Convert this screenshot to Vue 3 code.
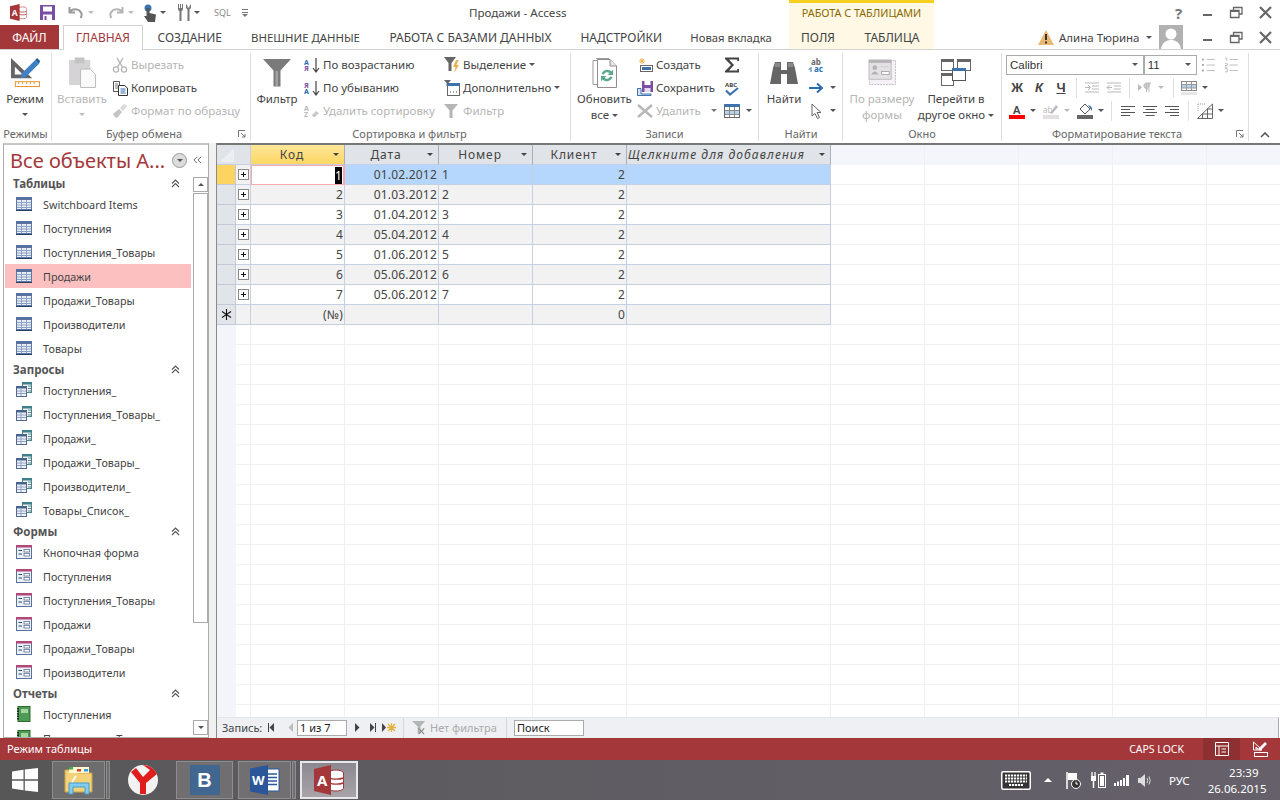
<template>
  <div class="app">
    <!-- спрайт иконок -->
    <svg class="sprite" aria-hidden="true">
      <symbol id="tbl" viewBox="0 0 16 16">
        <rect x="0.5" y="1.5" width="15" height="12" fill="#e6ecf5" stroke="#5f78a3" />
        <rect x="0" y="1" width="16" height="3" fill="#56719f" />
        <path d="M1 6.5H15M1 9H15M1 11.5H15M5.5 4V13M10.5 4V13" stroke="#8ea3c4" />
        <path d="M0 14.5H16" stroke="#2f3f5c" />
      </symbol>
      <symbol id="qry" viewBox="0 0 16 16">
        <rect x="6.5" y="0.5" width="9" height="10" fill="#eef3f4" stroke="#4d8390" />
        <rect x="6" y="0" width="10" height="2.5" fill="#3e8089" />
        <path d="M12 4H15M12 6.5H15M12 9H15" stroke="#5f7f8a" />
        <rect x="0.5" y="4.5" width="10" height="10" fill="#eef2f7" stroke="#53688c" />
        <rect x="0" y="4" width="11" height="2.5" fill="#47648f" />
        <path d="M1 9H10M1 11.5H10M5 7V14" stroke="#8ea3c4" />
      </symbol>
      <symbol id="frm" viewBox="0 0 16 16">
        <rect x="0.5" y="1.5" width="15" height="13" fill="#edf1f7" stroke="#59709a" />
        <rect x="0" y="1" width="16" height="2.5" fill="#b3477a" />
        <path d="M2.5 6.5H6M2.5 10H6" stroke="#394a68" />
        <rect x="8" y="5.5" width="5.5" height="2.5" fill="#fff" stroke="#59709a" stroke-width=".8" />
        <rect x="8" y="9.5" width="5.5" height="2.5" fill="#fff" stroke="#59709a" stroke-width=".8" />
      </symbol>
      <symbol id="rpt" viewBox="0 0 16 16">
        <rect x="2" y="0.5" width="12" height="15" fill="#4f9a55" stroke="#2d6a36" />
        <rect x="5" y="3" width="7" height="4" fill="#a5d8a0" />
        <path d="M2 2V14" stroke="#1f2f22" stroke-width="2" stroke-dasharray="1.5 1" />
      </symbol>
      <symbol id="mode" viewBox="0 0 32 32">
        <path fill-rule="evenodd" d="M1 1 L1 22 L23 22 Z M5 10 L5 18 L13 18 Z" fill="#666" />
        <path d="M12 17 L26 3 L30 7 L16 21 L11 22 Z" fill="#3f7fc4" />
        <path d="M26 3 L28 1 L31 4 L30 7Z" fill="#1f5c9c" />
        <rect x="5.5" y="25.5" width="25" height="5" fill="#fff" stroke="#e8912d" />
        <path d="M9 26V28M13 26V28M17 26V28M21 26V28M25 26V28" stroke="#e8912d" />
      </symbol>
      <symbol id="paste" viewBox="0 0 30 32">
        <rect x="1" y="3" width="22" height="26" fill="#d6d3d6" />
        <rect x="7" y="0.5" width="10" height="6" fill="#c6c3c6" />
        <path d="M13 12.5H23L28.5 18V31.5H13Z" fill="#fbfbfb" stroke="#bdbabd" />
      </symbol>
      <symbol id="cut" viewBox="0 0 16 16">
        <path d="M5 1 L10.5 10M11 1 L5.5 10" stroke="#b5b5b5" stroke-width="1.4" fill="none" />
        <circle cx="4" cy="12.5" r="2.6" fill="none" stroke="#b5b5b5" stroke-width="1.3" />
        <circle cx="12" cy="12.5" r="2.6" fill="none" stroke="#b5b5b5" stroke-width="1.3" />
      </symbol>
      <symbol id="copy" viewBox="0 0 16 16">
        <path d="M1.5 1.5H7.5V11.5H1.5Z" fill="#fff" stroke="#555" />
        <path d="M3 4H6M3 6H6M3 8H6" stroke="#777" />
        <path d="M6.5 5.5H12.5L15.5 8V15.5H6.5Z" fill="#fff" stroke="#333" />
        <path d="M8.5 9H13.5M8.5 11H13.5M8.5 13H13.5" stroke="#2a6cb0" />
      </symbol>
      <symbol id="brush" viewBox="0 0 16 16">
        <path d="M1 11 L7 6 L10 9 L5 15 Q2 14 1 11Z" fill="#c4c4c4" />
        <path d="M8 5 L12 1 L15 3 L11 8Z" fill="#dadada" />
      </symbol>
      <symbol id="funnel" viewBox="0 0 28 28">
        <path d="M0 0H28L17.5 11.5V27.5H10.5V11.5Z" fill="#7a7a7a" />
        <path d="M12.5 12H15V27H12.5Z" fill="#a3a3a3" />
      </symbol>
      <symbol id="fsel" viewBox="0 0 16 16">
        <path d="M0 0H12L7.5 6V14H4.5V6Z" fill="#666" />
        <path d="M12 3L9 10H11.5L10 16L15 8H12.5L14.5 3Z" fill="#eeb24e" />
      </symbol>
      <symbol id="fadv" viewBox="0 0 16 16">
        <path d="M0 0H7L4.5 3V6H2.5V3Z" fill="#666" />
        <rect x="3.5" y="3.5" width="12" height="12" fill="#fff" stroke="#666" />
        <rect x="3" y="3" width="13" height="3" fill="#3d72ad" />
        <path d="M6 12H7M9 12H10M12 12H13" stroke="#444" />
      </symbol>
      <symbol id="fgrey" viewBox="0 0 16 16">
        <path d="M0 1H14L8.5 7.5V15H5.5V7.5Z" fill="#b5b5b5" />
      </symbol>
      <symbol id="refresh" viewBox="0 0 26 30">
        <path d="M1 2.5H8V26.5H1Z M4 0.5H17V4" fill="none" stroke="#9a9a9a" />
        <path d="M5.5 1.5H18L24.5 8V29.5H5.5Z" fill="#fff" stroke="#8f8f8f" />
        <path d="M18 1.5V8H24.5" fill="#e6e6e6" stroke="#8f8f8f" />
        <path d="M9.5 16 A6 6 0 0 1 19.5 13.5L21 11.5V17H15.5L17.5 15A3.5 3.5 0 0 0 12 16.5Z" fill="#5ba88e" />
        <path d="M20.5 19A6 6 0 0 1 10.5 21.5L9 23.5V18H14.5L12.5 20A3.5 3.5 0 0 0 18 18.5Z" fill="#5ba88e" />
      </symbol>
      <symbol id="newrec" viewBox="0 0 16 16">
        <rect x="3.5" y="8.5" width="12" height="6" fill="#fff" stroke="#666" />
        <rect x="5" y="10" width="9" height="3" fill="#3d72ad" />
        <path d="M5 1V7M2 4H8M3 2L7 6M7 2L3 6" stroke="#eeb24e" />
      </symbol>
      <symbol id="saverec" viewBox="0 0 16 16">
        <path d="M0.5 8.5H4V14H14V15.5H0.5Z" fill="#d8e4f2" stroke="#3d72ad" />
        <rect x="5" y="1" width="11" height="11" fill="#7a4fa3" />
        <rect x="7.5" y="1" width="6" height="4" fill="#fff" />
        <rect x="7.5" y="8" width="6" height="4" fill="#e4d9ee" />
      </symbol>
      <symbol id="delrec" viewBox="0 0 16 16">
        <path d="M1 2L15 14M15 2L1 14" stroke="#b9b9b9" stroke-width="2.6" />
      </symbol>
      <symbol id="sigma" viewBox="0 0 16 16">
        <path d="M1 0.5H15V4H13.5L13 2.5H5L10 8L5 13.5H13L13.5 12H15V15.5H1V14L7 8L1 2Z" fill="#444" />
      </symbol>
      <symbol id="more" viewBox="0 0 16 16">
        <rect x="0.5" y="1.5" width="15" height="13" fill="#fff" stroke="#666" />
        <rect x="0" y="1" width="16" height="3" fill="#3d72ad" />
        <rect x="1" y="8" width="14" height="3" fill="#b6d1ea" />
        <path d="M1 7.5H15M1 11.5H15M5.5 4V14M10.5 4V14" stroke="#888" />
      </symbol>
      <symbol id="binoc" viewBox="0 0 28 24">
        <path d="M3 7L5 1H11V9H17V1H23L25 7L28 23H17V13H11V23H0Z" fill="#666" />
        <path d="M5 2H10V6H5ZM18 2H23V6H18Z" fill="#8a8a8a" />
      </symbol>
      <symbol id="goto" viewBox="0 0 16 16">
        <path d="M1 8H13M9 3.5L14 8L9 12.5" fill="none" stroke="#2a6cb0" stroke-width="2" />
      </symbol>
      <symbol id="cursor" viewBox="0 0 16 16">
        <path d="M4 1V13L7 10.5L9.5 15.5L11.5 14.5L9 9.5H13Z" fill="#fff" stroke="#666" />
      </symbol>
      <symbol id="fit" viewBox="0 0 30 28">
        <rect x="1.5" y="1.5" width="27" height="25" fill="#f6f1f7" stroke="#bcbcbc" stroke-dasharray="2 1" />
        <rect x="1" y="1" width="23" height="20" fill="#e3e1e4" stroke="#bcbcbc" />
        <rect x="1" y="1" width="23" height="3" fill="#b5b3b6" />
        <circle cx="7" cy="9" r="2.4" fill="#b5b3b6" />
        <path d="M3 16Q7 10 11 16Z" fill="#b5b3b6" />
        <rect x="14" y="13" width="8" height="3" fill="#fff" stroke="#aaa" />
        <path d="M14 8H21" stroke="#bbb" stroke-dasharray="1 1" />
      </symbol>
      <symbol id="windows" viewBox="0 0 30 27">
        <rect x="0.5" y="0.5" width="12" height="11" fill="#fff" stroke="#666" />
        <rect x="0" y="0" width="13" height="3" fill="#666" />
        <rect x="16.5" y="0.5" width="13" height="11" fill="#fff" stroke="#666" />
        <rect x="16" y="0" width="14" height="3" fill="#666" />
        <rect x="0.5" y="14.5" width="12" height="12" fill="#fff" stroke="#666" />
        <rect x="0" y="14" width="13" height="3" fill="#666" />
        <rect x="11.5" y="9.5" width="13" height="12" fill="#fff" stroke="#555" />
        <rect x="11" y="9" width="14" height="3" fill="#3d72ad" />
      </symbol>
      <symbol id="accbase" viewBox="0 0 30 30">
        <ellipse cx="22" cy="8" rx="7.5" ry="3" fill="#fff" stroke="#a4373a" />
        <rect x="14" y="8" width="15.5" height="15" fill="#fff" />
        <path d="M29.5 8V23C29.5 25 25 26 22 26 19 26 16 25.5 15 24" fill="#fff" stroke="#a4373a" />
        <path d="M16 13C18 14.5 26 14.5 29 13M16 18C18 19.5 26 19.5 29 18" fill="none" stroke="#a4373a" stroke-width="1.4" />
        <path d="M0 4L17 0V30L0 26Z" fill="#a4373a" />
      </symbol>
    </svg>

    <!-- заголовок окна -->
    <header class="titlebar">
      <div class="qat">
        <svg class="qa17" viewBox="0 0 30 30">
          <use href="#accbase" width="30" height="30" />
          <text x="3" y="21" font-size="15" font-weight="700" font-family="Noto Sans" fill="#fff">A</text>
        </svg>
        <svg width="15" height="15" viewBox="0 0 15 15">
          <rect width="15" height="15" fill="#7a4fa3" />
          <rect x="3" y="1.5" width="9" height="5" fill="#fff" />
          <rect x="3" y="9.5" width="9" height="5.5" fill="#fff" />
          <rect x="4.5" y="11" width="2" height="4" fill="#7a4fa3" />
        </svg>
        <svg width="15" height="13" viewBox="0 0 15 13">
          <path d="M1.5 1V6.5H7M1.5 6.5C4 2 11 2 13.5 7.5 14 9 13.5 10.5 12.5 12" fill="none" stroke="#9b9b9b" stroke-width="2" />
        </svg>
        <i class="cr off"></i>
        <svg width="15" height="13" viewBox="0 0 15 13">
          <path d="M13.5 1V6.5H8M13.5 6.5C11 2 4 2 1.5 7.5 1 9 1.5 10.5 2.5 12" fill="none" stroke="#b5b5b5" stroke-width="2" />
        </svg>
        <i class="cr off"></i>
        <svg width="15" height="18" viewBox="0 0 15 18">
          <circle cx="5" cy="4" r="3.5" fill="#3d72ad" />
          <path d="M3.5 4H6.5V9L13 10.5 12 18H5L1 12 3.5 12Z" fill="#555" />
        </svg>
        <i class="cr"></i>
        <svg width="14" height="17" viewBox="0 0 14 17">
          <path d="M1 0V5Q1 7 2.5 7V17H4.5V7Q6 7 6 5V0H5V4H4V0H3V4H2V0Z" fill="#777" />
          <path d="M9 0V4L10.5 5.5V17H12.5V5.5L14 4V0L12.5 2V3.5H10.5V2Z" fill="#777" />
        </svg>
        <i class="cr"></i>
        <span class="sql">SQL</span>
        <svg width="8" height="9" viewBox="0 0 8 9">
          <path d="M1 1.5H7M1 4.5H7" stroke="#777" />
          <path d="M1 6H7L4 9Z" fill="#777" />
        </svg>
      </div>
      <div class="title">Продажи - Access</div>
      <div class="ctx-head">РАБОТА С ТАБЛИЦАМИ</div>
      <div class="win-btns">
        <span class="help">?</span>
        <svg class="wb"><path d="M3 10H12" stroke="#666" stroke-width="2" /></svg>
        <svg class="wb"><path d="M4.5 5.5V2.5H13V9H10M1.5 5.5H10V12.5H1.5Z" fill="none" stroke="#666" stroke-width="1.3" /><path d="M1.5 6H10" stroke="#666" stroke-width="2" /></svg>
        <svg class="wb"><path d="M2 2L13 13M13 2L2 13" stroke="#666" stroke-width="2.2" /></svg>
      </div>
    </header>

    <!-- вкладки -->
    <nav class="tabs">
      <div class="tab file">ФАЙЛ</div>
      <div class="tab active">ГЛАВНАЯ</div>
      <div class="tab t1">СОЗДАНИЕ</div>
      <div class="tab t2">ВНЕШНИЕ ДАННЫЕ</div>
      <div class="tab t3">РАБОТА С БАЗАМИ ДАННЫХ</div>
      <div class="tab t4">НАДСТРОЙКИ</div>
      <div class="tab t5">Новая вкладка</div>
      <div class="ctx-tabs">
        <div class="tab c1">ПОЛЯ</div>
        <div class="tab c2">ТАБЛИЦА</div>
      </div>
      <div class="user">
        <svg width="16" height="15" viewBox="0 0 16 15">
          <path d="M8 0L16 15H0Z" fill="#e9b872" />
          <path d="M7 4H9V10H7ZM7 11.5H9V13.5H7Z" fill="#333" />
        </svg>
        <span class="user-name">Алина Тюрина</span>
        <i class="cr"></i>
        <svg class="avatar" viewBox="0 0 24 24">
          <rect width="24" height="24" fill="#b1b1b1" />
          <circle cx="12" cy="9" r="5.5" fill="#fff" />
          <path d="M2 24C3 17 8 15 12 15S21 17 22 24Z" fill="#fff" />
        </svg>
      </div>
      <div class="win-btns doc-btns">
        <svg class="wb"><path d="M3 10H12" stroke="#666" stroke-width="2" /></svg>
        <svg class="wb"><path d="M4.5 5.5V2.5H13V9H10M1.5 5.5H10V12.5H1.5Z" fill="none" stroke="#666" stroke-width="1.3" /><path d="M1.5 6H10" stroke="#666" stroke-width="2" /></svg>
        <svg class="wb"><path d="M2 2L13 13M13 2L2 13" stroke="#666" stroke-width="2.2" /></svg>
      </div>
    </nav>

    <!-- лента -->
    <section class="ribbon">
      <div class="group g-mode">
        <div class="g-body">
          <div class="big w50">
            <div class="big-ic"><svg width="31" height="31"><use href="#mode" /></svg></div>
            <span>Режим</span>
            <i class="cr line"></i>
          </div>
        </div>
        <div class="g-label">Режимы</div>
      </div>

      <div class="group g-clip">
        <div class="g-body">
          <div class="big w52 off">
            <div class="big-ic"><svg width="29" height="31"><use href="#paste" /></svg></div>
            <span>Вставить</span>
            <i class="cr line off"></i>
          </div>
          <div class="col">
            <div class="sb off"><svg class="i16"><use href="#cut" /></svg>Вырезать</div>
            <div class="sb"><svg class="i16"><use href="#copy" /></svg>Копировать</div>
            <div class="sb off"><svg class="i16"><use href="#brush" /></svg>Формат по образцу</div>
          </div>
        </div>
        <div class="g-label">Буфер обмена<svg class="launch" viewBox="0 0 8 8"><path d="M0.5 7V0.5H7M3 3L7 7M7 4V7H4" fill="none" stroke="#777" /></svg></div>
      </div>

      <div class="group g-sort">
        <div class="g-body">
          <div class="big w40">
            <div class="big-ic"><svg width="28" height="28"><use href="#funnel" /></svg></div>
            <span>Фильтр</span>
          </div>
          <div class="col w140">
            <div class="sb">
              <svg class="i16" viewBox="0 0 16 16">
                <text font-size="7" font-family="Noto Sans" font-weight="700"><tspan x="0" y="7.5" fill="#2a6cb0">А</tspan><tspan x="0" y="14" fill="#7a4fa3">Я</tspan></text>
                <path d="M12 1V14M9 11L12 15L15 11" fill="none" stroke="#444" stroke-width="1.2" />
              </svg>По возрастанию
            </div>
            <div class="sb">
              <svg class="i16" viewBox="0 0 16 16">
                <text font-size="7" font-family="Noto Sans" font-weight="700"><tspan x="0" y="7.5" fill="#7a4fa3">Я</tspan><tspan x="0" y="14" fill="#2a6cb0">А</tspan></text>
                <path d="M12 1V14M9 11L12 15L15 11" fill="none" stroke="#444" stroke-width="1.2" />
              </svg>По убыванию
            </div>
            <div class="sb off">
              <svg class="i16" viewBox="0 0 16 16">
                <text font-size="7" font-family="Noto Sans" font-weight="700" fill="#bbb"><tspan x="0" y="7.5">A</tspan><tspan x="0" y="14">Z</tspan></text>
                <path d="M8 12L12 8L15 10L11 14H9Z" fill="#c9c9c9" />
              </svg>Удалить сортировку
            </div>
          </div>
          <div class="col">
            <div class="sb"><svg class="i16"><use href="#fsel" /></svg>Выделение <i class="cr"></i></div>
            <div class="sb"><svg class="i16"><use href="#fadv" /></svg>Дополнительно <i class="cr"></i></div>
            <div class="sb off"><svg class="i16"><use href="#fgrey" /></svg>Фильтр</div>
          </div>
        </div>
        <div class="g-label">Сортировка и фильтр</div>
      </div>

      <div class="group g-rec">
        <div class="g-body">
          <div class="big w55">
            <div class="big-ic"><svg width="26" height="30"><use href="#refresh" /></svg></div>
            <span>Обновить</span>
            <span>все <i class="cr"></i></span>
          </div>
          <div class="col w87">
            <div class="sb"><svg class="i16"><use href="#newrec" /></svg>Создать</div>
            <div class="sb"><svg class="i16"><use href="#saverec" /></svg>Сохранить</div>
            <div class="sb off"><svg class="i16"><use href="#delrec" /></svg>Удалить <i class="cr spaced"></i></div>
          </div>
          <div class="col">
            <div class="sb"><svg class="i16"><use href="#sigma" /></svg></div>
            <div class="sb">
              <svg class="i16" viewBox="0 0 16 16">
                <text x="1" y="7" font-size="6" font-weight="700" font-family="Noto Sans" fill="#444">ABC</text>
                <path d="M2 10.5L6 14.5L14 8" fill="none" stroke="#3d72ad" stroke-width="2.2" />
              </svg>
            </div>
            <div class="sb"><svg class="i16"><use href="#more" /></svg><i class="cr ic"></i></div>
          </div>
        </div>
        <div class="g-label">Записи</div>
      </div>

      <div class="group g-find">
        <div class="g-body">
          <div class="big w34">
            <div class="big-ic"><svg width="28" height="24"><use href="#binoc" /></svg></div>
            <span>Найти</span>
          </div>
          <div class="col">
            <div class="sb">
              <svg class="i16 wide" viewBox="0 0 18 16">
                <text font-size="8" font-weight="700" font-family="Noto Sans"><tspan x="3" y="8" fill="#666">ab</tspan><tspan x="6" y="14.5" fill="#2a6cb0">ac</tspan></text>
                <path d="M0.5 13L3 10.5V15" fill="none" stroke="#2a6cb0" />
              </svg>
            </div>
            <div class="sb"><svg class="i16"><use href="#goto" /></svg><i class="cr ic"></i></div>
            <div class="sb"><svg class="i16"><use href="#cursor" /></svg><i class="cr ic"></i></div>
          </div>
        </div>
        <div class="g-label">Найти</div>
      </div>

      <div class="group g-win">
        <div class="g-body">
          <div class="big w70 off">
            <div class="big-ic"><svg width="29" height="27"><use href="#fit" /></svg></div>
            <span>По размеру</span>
            <span>формы</span>
          </div>
          <div class="big w78">
            <div class="big-ic"><svg width="30" height="27"><use href="#windows" /></svg></div>
            <span>Перейти в</span>
            <span>другое окно <i class="cr"></i></span>
          </div>
        </div>
        <div class="g-label">Окно</div>
      </div>

      <div class="group g-text">
        <div class="tx-rows">
          <div class="tx-row">
            <div class="combo font"><span>Calibri</span><i class="cr"></i></div>
            <div class="combo size"><span>11</span><i class="cr"></i></div>
            <svg class="list" viewBox="0 0 14 16"><path d="M0 2H2M0 8H2M0 14H2" stroke="#aaa" stroke-width="2" /><path d="M5 2H14M5 8H14M5 14H14" stroke="#bbb" /></svg>
            <svg class="list" viewBox="0 0 14 16"><path d="M0 0.5H2V3.5M0 6.5H2.5V8.5H0V10.5H2.5M0 12H2.5V15.5H0" fill="none" stroke="#aaa" stroke-width=".8" /><path d="M5 2H14M5 8H14M5 14H14" stroke="#bbb" /></svg>
          </div>
          <div class="tx-row">
            <b class="tb fmt">Ж</b>
            <b class="tb fmt it">К</b>
            <b class="tb fmt un">Ч</b>
            <i class="ts"></i>
            <span class="tb"><svg class="i16"><path d="M1 3H15M8 6H15M8 9H15M1 12H15M1 7.5H6M4 5L6.5 7.5L4 10" fill="none" stroke="#b9b9b9" /></svg></span>
            <span class="tb"><svg class="i16"><path d="M1 3H15M8 6H15M8 9H15M1 12H15M1 7.5H6M3.5 5L1 7.5L3.5 10" fill="none" stroke="#b9b9b9" /></svg></span>
            <i class="ts"></i>
            <span class="tb"><svg class="i16"><path d="M1 4L5 7.5L1 11Z" fill="#bbb" /><path d="M9.5 12V3H14M12 3V12M10 3Q6 3.5 7 6.5T10 8" fill="#ccc" stroke="#bbb" /></svg></span>
            <i class="cr off c10"></i>
            <i class="ts wide"></i>
            <span class="tb"><svg class="i16"><rect x="0.5" y="1.5" width="15" height="9" fill="#fff" stroke="#888" /><rect x="1" y="5" width="14" height="3" fill="#b6d1ea" /><path d="M1 4.5H15M1 8H15M5.5 2V10M10.5 2V10" stroke="#999" /><rect y="12" width="16" height="3" fill="#e6e6e6" /></svg></span>
            <i class="cr c10"></i>
          </div>
          <div class="tx-row">
            <span class="tb"><svg class="i16"><text x="4" y="11" font-size="11" font-weight="600" font-family="Noto Sans" fill="#444">A</text><rect y="12" width="16" height="4" fill="#f00" /></svg></span>
            <i class="cr c10"></i>
            <span class="tb gp"><svg class="i16"><text x="0" y="9.5" font-size="8" font-family="Noto Sans" fill="#bbb">ab</text><path d="M7 10L13 2L15 4L9 11Z" fill="#bbb" /><rect y="12" width="16" height="4" fill="#e3e0e4" /></svg></span>
            <i class="cr off c10"></i>
            <span class="tb gp"><svg class="i16"><path d="M3 6L8 1L13 6L8 11Z" fill="#fff" stroke="#555" /><path d="M11 2Q16 3 15 8L13 5Z" fill="#3d72ad" /><rect y="12" width="16" height="4" fill="#666" /></svg></span>
            <i class="cr c10"></i>
            <i class="ts r3"></i>
            <span class="tb"><svg class="i16"><path d="M1 3.5H15M1 6.5H10M1 9.5H15M1 12.5H10" stroke="#555" /></svg></span>
            <span class="tb"><svg class="i16"><path d="M1 3.5H15M3.5 6.5H12.5M1 9.5H15M3.5 12.5H12.5" stroke="#555" /></svg></span>
            <span class="tb"><svg class="i16"><path d="M1 3.5H15M6 6.5H15M1 9.5H15M6 12.5H15" stroke="#555" /></svg></span>
            <i class="ts r3"></i>
            <span class="tb"><svg class="i16"><path d="M0.5 15.5L15.5 1V15.5Z" fill="#fff" stroke="#666" /><path d="M5.5 11V15.5M10.5 6V15.5M5 11H15.5M10 6H15.5" stroke="#666" /><path d="M1 1H9M1 1V8" stroke="#999" stroke-dasharray="1 1" /></svg></span>
            <i class="cr c10"></i>
          </div>
        </div>
        <div class="g-label">Форматирование текста<svg class="launch" viewBox="0 0 8 8"><path d="M0.5 7V0.5H7M3 3L7 7M7 4V7H4" fill="none" stroke="#777" /></svg></div>
      </div>

      <div class="collapse">
        <svg width="10" height="6" viewBox="0 0 10 6"><path d="M1 5L5 1L9 5" fill="none" stroke="#555" stroke-width="1.6" /></svg>
      </div>
    </section>

    <main class="body">
      <!-- область навигации -->
      <aside class="nav">
        <div class="nav-head">
          <span class="nav-title">Все объекты А...</span>
          <span class="nav-drop"><i class="cr"></i></span>
          <svg class="nav-fold" viewBox="0 0 10 8"><path d="M4.5 0.5L1 4L4.5 7.5M9 0.5L5.5 4L9 7.5" fill="none" stroke="#666" stroke-width="1.1" /></svg>
        </div>
        <div class="nav-body">
          <div class="nav-list">
            <template v-for="sec in navSections" :key="sec.title">
              <div class="nav-sec">
                <span>{{ sec.title }}</span>
                <svg width="9" height="9" viewBox="0 0 9 9"><path d="M1 4.5L4.5 1L8 4.5M1 8L4.5 4.5L8 8" fill="none" stroke="#555" stroke-width="1.1" /></svg>
              </div>
              <div
                class="nav-item"
                v-for="item in sec.items"
                :key="item"
                :class="{ current: sec.icon === 'tbl' && item === 'Продажи' }"
              >
                <svg class="i16"><use :href="'#' + sec.icon" /></svg>
                <span>{{ item }}</span>
              </div>
            </template>
          </div>
          <div class="nav-scroll">
            <div class="sbtn"><i class="cr up"></i></div>
            <div class="thumb"></div>
            <div class="strack"></div>
            <div class="sbtn"><i class="cr"></i></div>
          </div>
        </div>
      </aside>
      <div class="splitter"></div>

      <!-- таблица -->
      <div class="doc">
        <div class="sheet">
          <div class="row head">
            <div class="c corner"><svg width="16" height="16" viewBox="0 0 16 16"><path d="M1 15L15 1V15Z" fill="#eceef1" /></svg></div>
            <div class="c corner2"></div>
            <div
              class="c hc"
              v-for="(col, i) in columns"
              :key="col"
              :class="{ sel: i === 0, add: i === 4 }"
            >
              <span>{{ col }}</span><i class="cr"></i>
            </div>
          </div>
          <div
            class="row"
            v-for="(r, i) in rows"
            :key="r.id"
            :class="{ selected: i === 0, alt: i % 2 === 1 }"
          >
            <div class="c selector"></div>
            <div class="c exp"><span class="plus"></span></div>
            <div class="c num idc"><span :class="{ mark: i === 0 }">{{ r.id }}</span></div>
            <div class="c num">{{ r.date }}</div>
            <div class="c">{{ r.no }}</div>
            <div class="c num">2</div>
            <div class="c"></div>
          </div>
          <div class="row alt">
            <div class="c selector star">
              <svg width="11" height="11" viewBox="0 0 11 11"><path d="M5.5 0V11M1 2.5L10 8.5M10 2.5L1 8.5" stroke="#111" stroke-width="1.1" /></svg>
            </div>
            <div class="c exp"></div>
            <div class="c num">(№)</div>
            <div class="c"></div>
            <div class="c"></div>
            <div class="c num">0</div>
            <div class="c"></div>
          </div>
        </div>

        <!-- строка навигации по записям -->
        <div class="recnav">
          <span class="rn-label">Запись:</span>
          <svg class="rn f" viewBox="0 0 8 9"><path d="M1.5 0V9" stroke="#444" /><path d="M7 0V9L2.5 4.5Z" fill="#444" /></svg>
          <svg class="rn p" viewBox="0 0 8 9"><path d="M6 0V9L1.5 4.5Z" fill="#bbb" /></svg>
          <div class="rn-input cur">1 из 7</div>
          <svg class="rn n" viewBox="0 0 8 9"><path d="M2 0V9L6.5 4.5Z" fill="#444" /></svg>
          <svg class="rn l" viewBox="0 0 8 9"><path d="M6.5 0V9" stroke="#444" /><path d="M1 0V9L5.5 4.5Z" fill="#444" /></svg>
          <svg class="rn e" viewBox="0 0 14 9"><path d="M0 0V9L4 4.5Z" fill="#444" /><path d="M9.5 0V9M5 4.5H14M6 1L13 8M13 1L6 8" stroke="#e3b341" stroke-width="1.3" /></svg>
          <i class="rn-sep"></i>
          <svg class="rn-filter" viewBox="0 0 16 16"><path d="M0 1H14L9 7V14H6V7Z" fill="#b5b5b5" /><path d="M7 9L13 15M13 9L7 15" stroke="#888" stroke-width="1.3" /></svg>
          <span class="rn-off">Нет фильтра</span>
          <i class="rn-sep two"></i>
          <div class="rn-input search">Поиск</div>
        </div>
      </div>
    </main>

    <!-- строка состояния -->
    <footer class="status">
      <span class="st-left">Режим таблицы</span>
      <span class="st-caps">CAPS LOCK</span>
      <span class="st-view on">
        <svg class="i16"><path d="M1.5 1.5H14.5V14.5H1.5ZM1.5 5H14.5M5 5V14.5M7.5 8H12M7.5 11H12" fill="none" stroke="#fff" /></svg>
      </span>
      <span class="st-view">
        <svg class="i16"><path d="M1.5 1V9H10ZM4 6V8H6Z" fill="none" stroke="#fff" /><path d="M6 8L13 1L15 3L8 10Z" fill="#fff" /><rect x="2.5" y="11.5" width="13" height="4" fill="none" stroke="#fff" /></svg>
      </span>
    </footer>

    <!-- панель задач -->
    <div class="taskbar">
      <div class="start">
        <svg width="26" height="24" viewBox="0 0 26 24">
          <path d="M0 3.5L11.5 1.8V11.3H0ZM12.8 1.6L26 0V11.3H12.8ZM0 12.7H11.5V22.2L0 20.5ZM12.8 12.7H26V24L12.8 22.4Z" fill="#fff" />
        </svg>
      </div>
      <div class="tk">
        <svg width="30" height="30" viewBox="0 0 30 30">
          <path d="M1 5H12L14 8H28V27H1Z" fill="#f3d27a" stroke="#c9a44c" />
          <rect x="5" y="2" width="20" height="6" fill="#fff5d0" />
          <rect x="5" y="2" width="4" height="2.5" fill="#3cb04a" />
          <rect x="13" y="4" width="4" height="2.5" fill="#d0492f" />
          <rect x="20" y="4" width="4" height="2.5" fill="#3a9ad9" />
          <path d="M5 29V18H25V29H21V22H9V29Z" fill="#7fcdf0" stroke="#4a9bc9" />
          <path d="M8 17L12 11" stroke="#fff" stroke-width="1.5" />
        </svg>
      </div>
      <i class="tk-strip"></i>
      <div class="tk-plain">
        <svg width="30" height="30" viewBox="0 0 30 30">
          <circle cx="15" cy="15" r="15" fill="#f2f2f2" />
          <path d="M15 0A15 15 0 0 1 29 9L18 18V29H12V18L3 7 8 3 15 12 22 5 15 0Z" fill="#e01d1d" />
        </svg>
      </div>
      <div class="tk vk"><span class="vk-tile">В</span></div>
      <div class="tk word">
        <svg width="30" height="30" viewBox="0 0 30 30">
          <rect x="12" y="4" width="17" height="22" fill="#fff" stroke="#2b579a" />
          <path d="M17 9H27M17 12.5H27M17 16H27M17 19.5H27" stroke="#2b579a" stroke-width="1.5" />
          <path d="M0 3.5L18 0V30L0 26.5Z" fill="#2b579a" />
          <text x="2" y="20" font-size="13" font-weight="700" font-family="Noto Sans" fill="#fff">W</text>
        </svg>
      </div>
      <i class="tk-strip"></i>
      <div class="tk access">
        <svg width="30" height="30" viewBox="0 0 30 30">
          <use href="#accbase" width="30" height="30" />
          <text x="3" y="21" font-size="15" font-weight="700" font-family="Noto Sans" fill="#fff">A</text>
        </svg>
      </div>
      <div class="tray">
        <svg width="30" height="19" viewBox="0 0 30 19">
          <rect x="0.75" y="0.75" width="28.5" height="17.5" rx="1.5" fill="#333" stroke="#fff" stroke-width="1.5" />
          <path d="M4 4.5H26M4 7.5H26M4 10.5H26M8 14H22" stroke="#fff" stroke-width="1.8" stroke-dasharray="2.2 .8" />
        </svg>
        <svg class="t-up" width="8" height="4" viewBox="0 0 8 4"><path d="M0 4L4 0L8 4Z" fill="#fff" /></svg>
        <svg class="t-flag" width="15" height="17" viewBox="0 0 15 17">
          <path d="M1 0V17" stroke="#fff" stroke-width="1.5" />
          <path d="M2 1H11V8H2Z" fill="#fff" />
          <circle cx="10" cy="12" r="4.5" fill="#333" stroke="#fff" />
          <path d="M10 9.5V12H12" stroke="#fff" fill="none" />
        </svg>
        <svg class="t-bat" width="15" height="16" viewBox="0 0 15 16">
          <path d="M1 0V4M4 0V4" stroke="#fff" stroke-width="1.3" />
          <rect x="0" y="4" width="5" height="5" fill="#fff" />
          <path d="M2.5 9V16" stroke="#fff" stroke-width="1.5" />
          <rect x="7.5" y="2.5" width="7" height="13" fill="none" stroke="#fff" />
          <rect x="9" y="4" width="4" height="10" fill="#fff" />
          <rect x="9.5" y="0.5" width="3" height="2" fill="#fff" />
        </svg>
        <svg class="t-sig" width="15" height="11" viewBox="0 0 15 11">
          <path d="M0 8H2V11H0ZM3 6.5H5V11H3ZM6 5H8V11H6ZM9 3H11V11H9ZM12 0H15V11H12Z" fill="#fff" />
        </svg>
        <svg class="t-vol" width="15" height="13" viewBox="0 0 15 13">
          <path d="M0 4H2.5L7 0V13L2.5 9H0Z" fill="#ddd" />
          <path d="M9 4Q10.5 6.5 9 9M11 2.5Q13.5 6.5 11 10.5" fill="none" stroke="#ddd" />
        </svg>
        <span class="t-lang">РУС</span>
        <div class="t-clock">
          <span>23:39</span>
          <span>26.06.2015</span>
        </div>
      </div>
    </div>
  </div>
</template>

<script setup>
const columns = ["Код", "Дата", "Номер", "Клиент", "Щелкните для добавления"];

const rows = [
  { id: 1, date: "01.02.2012", no: 1 },
  { id: 2, date: "01.03.2012", no: 2 },
  { id: 3, date: "01.04.2012", no: 3 },
  { id: 4, date: "05.04.2012", no: 4 },
  { id: 5, date: "01.06.2012", no: 5 },
  { id: 6, date: "05.06.2012", no: 6 },
  { id: 7, date: "05.06.2012", no: 7 },
];

const navSections = [
  {
    title: "Таблицы",
    icon: "tbl",
    items: ["Switchboard Items", "Поступления", "Поступления_Товары", "Продажи", "Продажи_Товары", "Производители", "Товары"],
  },
  {
    title: "Запросы",
    icon: "qry",
    items: ["Поступления_", "Поступления_Товары_", "Продажи_", "Продажи_Товары_", "Производители_", "Товары_Список_"],
  },
  {
    title: "Формы",
    icon: "frm",
    items: ["Кнопочная форма", "Поступления", "Поступления_Товары", "Продажи", "Продажи_Товары", "Производители"],
  },
  {
    title: "Отчеты",
    icon: "rpt",
    items: ["Поступления", "Поступления_Товары"],
  },
];
</script>

<style>
html,
body {
  margin: 0;
  background: #fff;
}
</style>

<style scoped>
.app {
  width: 1280px;
  height: 800px;
  display: flex;
  flex-direction: column;
  overflow: hidden;
  font-family: "Noto Sans", "Open Sans", sans-serif;
  font-size: 11px;
  color: #444;
  background: #fff;
}
.sprite {
  width: 0;
  height: 0;
  position: absolute;
}
.i16 {
  width: 16px;
  height: 16px;
  flex: none;
}
.i16.wide {
  width: 18px;
}
/* маленький треугольник у выпадающих кнопок */
.cr {
  display: inline-block;
  flex: none;
  width: 0;
  height: 0;
  border-left: 3px solid transparent;
  border-right: 3px solid transparent;
  border-top: 3px solid #555;
  vertical-align: middle;
}
.cr.off {
  border-top-color: #bdbdbd;
}
.cr.up {
  border-top: 0;
  border-bottom: 3px solid #555;
}

/* заголовок */
.titlebar {
  height: 25px;
  display: flex;
  flex: none;
}
.qat {
  width: 469px;
  display: grid;
  grid-template-columns: 30px 28px 20px 21px 19px 15px 17px 17px 17px 20px 27px 8px;
  align-items: center;
  padding-left: 10px;
  box-sizing: border-box;
}
.qa17 {
  width: 17px;
  height: 17px;
}
.sql {
  font-size: 9px;
  color: #888;
}
.title {
  width: 320px;
  font-size: 11.6px;
  line-height: 26px;
}
.ctx-head {
  width: 145px;
  box-sizing: border-box;
  border-top: 3px solid #f7cf1f;
  background: #fef8e4;
  color: #8a6a00;
  font-size: 10.8px;
  line-height: 20px;
  text-align: center;
}
.win-btns {
  margin-left: auto;
  display: flex;
  align-items: center;
  padding-right: 7px;
}
.help {
  width: 29px;
  text-align: center;
  font-size: 15px;
  font-weight: 700;
  color: #777;
}
.wb {
  width: 15px;
  height: 15px;
  margin-left: 14px;
}
.help + .wb {
  margin-left: 7px;
}

/* вкладки */
.tabs {
  height: 25px;
  flex: none;
  display: flex;
  align-items: stretch;
  box-sizing: border-box;
  border-bottom: 1px solid #d2d2d2;
}
.tab {
  font-size: 12px;
  line-height: 25px;
  color: #444;
  white-space: nowrap;
  text-align: center;
  flex: none;
}
.tab.t1 { width: 93.5px; }
.tab.t2 { width: 138px; font-size: 11.4px; }
.tab.t3 { width: 192px; }
.tab.t4 { width: 109.5px; }
.tab.t5 { width: 110px; font-size: 11.3px; }
.tab.c1 { width: 58px; }
.tab.c2 { width: 87px; padding-left: 3px; box-sizing: border-box; }
.tab.file {
  width: 59px;
  background: #a4373a;
  color: #fff;
  margin-right: 4px;
  height: 24px;
}
.tab.active {
  width: 80px;
  box-sizing: border-box;
  color: #a4373a;
  background: #fff;
  border: 1px solid #d2d2d2;
  border-bottom: 0;
  height: 25px;
  line-height: 24px;
}
.ctx-tabs {
  width: 145px;
  flex: none;
  display: flex;
  background: #fef8e4;
  margin-left: 3px;
  height: 24px;
}
.user {
  display: flex;
  align-items: center;
  margin-left: 104px;
  flex: none;
}
.user-name {
  font-size: 11.5px;
  margin: 0 6px 0 5px;
}
.avatar {
  width: 24px;
  height: 24px;
  margin-left: 7px;
}

/* лента */
.ribbon {
  height: 93px;
  flex: none;
  display: flex;
  box-sizing: border-box;
  padding-top: 3px;
}
.group {
  height: 88px;
  display: flex;
  flex-direction: column;
  box-sizing: border-box;
  border-right: 1px solid #dedede;
}
.g-mode { width: 52px; }
.g-clip { width: 199px; padding-left: 4px; }
.g-sort { width: 320px; padding-left: 6px; }
.g-rec { width: 188px; padding-left: 6px; }
.g-find { width: 84px; padding-left: 8px; }
.g-win { width: 159px; padding-left: 4px; }
.g-text { width: 247px; padding-left: 4px; }
.g-body {
  height: 74px;
  display: flex;
}
.g-label {
  position: relative;
  height: 14px;
  line-height: 14px;
  text-align: center;
  color: #666;
  font-size: 11px;
  white-space: nowrap;
}
.g-clip .g-label { padding-right: 18px; }
.g-sort .g-label { padding-right: 8px; }
.g-rec .g-label { padding-right: 6px; }
.g-find .g-label { padding-right: 7px; }
.g-win .g-label { padding-right: 4px; }
.g-text .g-label { padding-right: 20px; }
.launch {
  position: absolute;
  right: 4px;
  top: 3px;
  width: 8px;
  height: 8px;
}
.big {
  display: flex;
  flex-direction: column;
  align-items: center;
  flex: none;
  line-height: 16px;
  font-size: 11.5px;
  white-space: nowrap;
  margin-top: 1px;
}
.big .big-ic {
  height: 37px;
  display: flex;
  align-items: center;
}
.big .cr.line {
  margin-top: 6px;
}
.big.off {
  color: #b5b5b5;
}
.w34 { width: 34px; }
.w40 { width: 40px; }
.w50 { width: 50px; }
.w52 { width: 52px; }
.w55 { width: 55px; }
.w70 { width: 70px; }
.w78 { width: 78px; }
.col {
  display: flex;
  flex-direction: column;
}
.big + .col {
  margin-left: 7px;
}
.g-clip .big + .col {
  margin-left: 4px;
}
.g-rec .big + .col {
  margin-left: 5px;
}
.w140 { width: 140px; }
.w87 { width: 87px; }
.sb {
  height: 23px;
  display: flex;
  align-items: center;
  gap: 3px;
  font-size: 11.5px;
  white-space: nowrap;
}
.sb .cr.ic {
  margin-left: 3px;
}
.sb .cr.spaced {
  margin-left: 7px;
}
.sb.off {
  color: #b5b5b5;
}
.sb.off .cr {
  border-top-color: #777;
}

/* форматирование текста */
.tx-rows {
  height: 74px;
  display: flex;
  flex-direction: column;
}
.tx-row {
  height: 23px;
  display: flex;
  align-items: center;
}
.combo {
  height: 20px;
  box-sizing: border-box;
  border: 1px solid #ababab;
  display: flex;
  align-items: center;
  justify-content: space-between;
  padding: 0 5px 0 3px;
  background: #fff;
  color: #333;
  font-family: "Liberation Sans", sans-serif;
  font-size: 11.5px;
}
.combo.font {
  width: 139px;
}
.combo.size {
  width: 54px;
  margin-right: 5px;
}
.list {
  width: 13px;
  height: 16px;
  margin-right: 10px;
}
.tb {
  width: 22px;
  height: 20px;
  display: flex;
  align-items: center;
  justify-content: center;
  flex: none;
}
.tb.gp {
  margin-left: 2px;
}
.fmt {
  font-size: 13px;
  color: #444;
  font-family: "Liberation Sans", sans-serif;
}
.fmt.it {
  font-style: italic;
}
.fmt.un {
  text-decoration: underline;
}
.c10 {
  margin: 0 2px;
}
.ts {
  width: 1px;
  height: 20px;
  background: #dedede;
  margin: 0 4px;
  flex: none;
}
.ts.wide {
  margin-left: 7px;
}
.ts.r3 {
  margin: 0 5px;
}
.collapse {
  flex: 1;
  display: flex;
  justify-content: flex-end;
  align-items: flex-end;
  height: 85px;
  padding-right: 10px;
  box-sizing: border-box;
}

/* основная область */
.body {
  flex: 1;
  min-height: 0;
  display: flex;
}
.nav {
  width: 206px;
  margin-left: 3px;
  box-sizing: border-box;
  border: 1px solid #ababab;
  border-top: 2px solid #c6c6c6;
  display: flex;
  flex-direction: column;
  flex: none;
}
.nav-head {
  height: 29px;
  padding-top: 1px;
  box-sizing: border-box;
  display: flex;
  align-items: center;
  flex: none;
}
.nav-title {
  font-size: 20px;
  color: #a4373a;
  padding-left: 6px;
  width: 168px;
  white-space: nowrap;
  box-sizing: border-box;
}
.nav-drop {
  width: 13px;
  height: 13px;
  border-radius: 50%;
  border: 1px solid #9a9a9a;
  background: #dcdcdc;
  display: flex;
  align-items: center;
  justify-content: center;
}
.nav-fold {
  width: 9px;
  height: 8px;
  margin-left: 6px;
}
.nav-body {
  flex: 1;
  min-height: 0;
  display: flex;
}
.nav-list {
  flex: 1;
  min-width: 0;
  overflow: hidden;
}
.nav-sec {
  height: 18px;
  box-sizing: border-box;
  display: flex;
  align-items: center;
  justify-content: space-between;
  padding: 1px 13px 0 9px;
  font-weight: 700;
  font-size: 11.5px;
  color: #555;
}
.nav-item {
  height: 24px;
  display: flex;
  align-items: center;
  gap: 11px;
  padding-left: 11px;
  margin: 0 2px 0 1px;
  font-size: 10.8px;
}
.nav-item.current {
  background: #fdc0c1;
}
.nav-scroll {
  width: 15px;
  flex: none;
  display: flex;
  flex-direction: column;
  padding: 3px 0 2px;
  box-sizing: border-box;
}
.sbtn {
  height: 15px;
  flex: none;
  box-sizing: border-box;
  border: 1px solid #ababab;
  display: flex;
  align-items: center;
  justify-content: center;
}
.thumb {
  height: 430px;
  margin-top: 1px;
  border: 1px solid #ababab;
  box-sizing: border-box;
}
.strack {
  flex: 1;
}
.splitter {
  width: 8px;
  flex: none;
  box-sizing: border-box;
  background: #f1f1f1;
  border-right: 1px solid #8a8a8a;
}

/* лист данных */
.doc {
  flex: 1;
  min-width: 0;
  display: flex;
  flex-direction: column;
  border-top: 2px solid #777;
}
.sheet {
  flex: 1;
  min-height: 0;
  background:
    linear-gradient(#f0f0f4, #f0f0f4) 33px 0 / 1px 100% no-repeat,
    linear-gradient(#f0f0f4, #f0f0f4) 127px 0 / 1px 100% no-repeat,
    linear-gradient(#f0f0f4, #f0f0f4) 221px 0 / 1px 100% no-repeat,
    linear-gradient(#f0f0f4, #f0f0f4) 315px 0 / 1px 100% no-repeat,
    linear-gradient(#f0f0f4, #f0f0f4) 409px 0 / 1px 100% no-repeat,
    linear-gradient(#f0f0f4, #f0f0f4) 613px 0 / 1px 100% no-repeat,
    linear-gradient(#f0f0f4, #f0f0f4) 707px 0 / 1px 100% no-repeat,
    linear-gradient(#f0f0f4, #f0f0f4) 801px 0 / 1px 100% no-repeat,
    linear-gradient(#f0f0f4, #f0f0f4) 895px 0 / 1px 100% no-repeat,
    linear-gradient(#f0f0f4, #f0f0f4) 989px 0 / 1px 100% no-repeat,
    linear-gradient(#f4f6fb, #f4f6fb) 0 0 / 100% 20px no-repeat,
    linear-gradient(#f3f5fa, #f3f5fa) 0 0 / 19px 100% no-repeat,
    repeating-linear-gradient(to bottom, #fff 0 19px, #f0f0f4 19px 20px);
}
.row {
  width: 614px;
  height: 20px;
  display: grid;
  grid-template-columns: 19px 15px 94px 94px 94px 94px 204px;
  background: #fff;
  font-size: 12px;
  letter-spacing: 0.2px;
  color: #444;
}
.row.alt {
  background: #f2f2f2;
}
.c {
  box-sizing: border-box;
  border-right: 1px solid #c5d0e3;
  border-bottom: 1px solid #c5d0e3;
  line-height: 20px;
  padding: 0 3px;
  white-space: nowrap;
  overflow: hidden;
}
.num {
  text-align: right;
  padding: 0 1px 0 0;
}
.row.selected .c {
  background: #b5d7fd;
}
.row.selected .selector {
  background: #fbd560;
}
.row.selected .exp {
  background: #f2f2f2;
}
.row.selected .idc {
  background: #fff;
  border: 1px solid #f7a9ab;
  border-width: 1px 2px 1px 1px;
}
.mark {
  background: #000;
  color: #fff;
  display: inline-block;
  line-height: 17px;
  width: 7px;
  text-align: center;
}
.selector {
  background: #e1e4e9;
  border-color: #c3cad6;
}
.star {
  display: flex;
  align-items: center;
  justify-content: center;
  padding: 0;
}
.exp {
  display: flex;
  align-items: center;
  justify-content: center;
  padding: 0;
}
.plus {
  width: 9px;
  height: 9px;
  border: 1px solid #8a8a8a;
  background:
    linear-gradient(#111, #111) center / 5px 1px no-repeat,
    linear-gradient(#111, #111) center / 1px 5px no-repeat,
    #fff;
}
.head {
  background: #e0e3e7;
  letter-spacing: 0;
}
.corner {
  padding: 0;
  background: #e0e3e7;
  display: flex;
  align-items: center;
  justify-content: center;
  border-right: 0;
}
.corner2 {
  background: #e0e3e7;
}
.hc {
  display: flex;
  align-items: center;
  background: #e0e3e7;
  border-right: 1px solid #a9b0bc;
  border-bottom: 1px solid #c5d0e3;
  padding: 0 5px 0 0;
  font-size: 12px;
  letter-spacing: 0.9px;
}
.hc span {
  flex: 1;
  text-align: center;
}
.hc .cr {
  border-left-width: 3.5px;
  border-right-width: 3.5px;
  border-top: 3.5px solid #444;
}
.hc.sel {
  background: linear-gradient(#fee79a, #fdd663);
}
.hc.add {
  font-style: italic;
  letter-spacing: 1.1px;
}
.hc.add span {
  text-align: left;
  padding-left: 1px;
}

/* навигация по записям */
.recnav {
  height: 21px;
  flex: none;
  display: flex;
  align-items: center;
  background: #eef0f3;
  border-top: 1px solid #e3e5e8;
  border-right: 1px solid #ababab;
  box-sizing: border-box;
  font-size: 11px;
  padding: 0 1px 1px 5px;
  margin-right: 1px;
}
.rn-label {
  width: 45px;
  flex: none;
}
.rn {
  width: 8px;
  height: 9px;
  flex: none;
}
.rn.p {
  margin-left: 12px;
}
.rn.n {
  margin-left: 6px;
}
.rn.l {
  margin-left: 8px;
}
.rn.e {
  width: 14px;
  margin-left: 5px;
}
.rn-input {
  height: 16px;
  box-sizing: border-box;
  background: #fff;
  border: 1px solid #aaa;
  color: #222;
  line-height: 14px;
  padding-left: 2px;
  flex: none;
}
.rn-input.cur {
  width: 50px;
  margin-left: 2px;
}
.rn-input.search {
  width: 70px;
}
.rn-sep {
  width: 1px;
  height: 20px;
  background: #d4d6d9;
  margin-left: 7px;
  flex: none;
}
.rn-filter {
  width: 15px;
  height: 15px;
  margin-left: 8px;
  flex: none;
}
.rn-off {
  color: #aaa;
  margin-left: 3px;
  width: 76px;
  flex: none;
}
.rn-sep.two {
  margin: 0 7px 0 0;
}

/* статус */
.status {
  height: 22px;
  flex: none;
  display: flex;
  align-items: stretch;
  background: #a4373a;
  color: #fff;
  font-size: 11px;
  line-height: 22px;
}
.st-left {
  padding-left: 7px;
  flex: 1;
}
.st-caps {
  margin-right: 19px;
  font-size: 10.5px;
}
.st-view {
  width: 37px;
  display: flex;
  align-items: center;
  justify-content: center;
}
.st-view.on {
  background: #8e2f31;
}
.st-view + .st-view {
  width: 40px;
}

/* панель задач */
.taskbar {
  height: 40px;
  flex: none;
  display: flex;
  align-items: center;
  background: linear-gradient(to right, #575757 0, #5e5b60 30%, #65606a 100%);
  color: #fff;
  box-sizing: border-box;
}
.start {
  width: 52px;
  flex: none;
  padding-left: 12px;
  box-sizing: border-box;
  display: flex;
  align-items: center;
}
.tk {
  height: 38px;
  width: 53px;
  box-sizing: border-box;
  border: 1px solid rgba(255, 255, 255, 0.22);
  background: rgba(255, 255, 255, 0.13);
  display: flex;
  align-items: center;
  justify-content: center;
  flex: none;
}
.tk-strip {
  width: 4px;
  height: 38px;
  margin-left: 1px;
  box-sizing: border-box;
  border: 1px solid rgba(255, 255, 255, 0.22);
  background: rgba(255, 255, 255, 0.13);
  flex: none;
}
.tk-plain {
  width: 66px;
  flex: none;
  display: flex;
  justify-content: center;
}
.tk.vk {
  width: 57px;
  margin-right: 5px;
}
.vk-tile {
  width: 30px;
  height: 30px;
  background: #41668f;
  color: #fff;
  font-family: "Liberation Sans", sans-serif;
  font-size: 20px;
  font-weight: 700;
  line-height: 30px;
  text-align: center;
}
.tk.access {
  width: 58px;
  margin-left: 4px;
  border: 2px solid #e8e6e8;
  background: linear-gradient(#8c8890, #a8a3a8);
}
.tray {
  flex: 1;
  display: flex;
  align-items: center;
  height: 40px;
  padding-left: 643px;
}
.t-up {
  margin-left: 13px;
}
.t-flag {
  margin-left: 14px;
}
.t-bat {
  margin-left: 10px;
}
.t-sig {
  margin-left: 8px;
}
.t-vol {
  margin-left: 9px;
}
.t-lang {
  margin-left: 16px;
  font-size: 11.5px;
}
.t-clock {
  margin-left: 18px;
  padding-top: 2px;
  display: flex;
  flex-direction: column;
  align-items: flex-end;
  font-size: 11.5px;
  line-height: 16px;
}
.t-clock span:first-child {
  margin-right: 8px;
}
</style>
